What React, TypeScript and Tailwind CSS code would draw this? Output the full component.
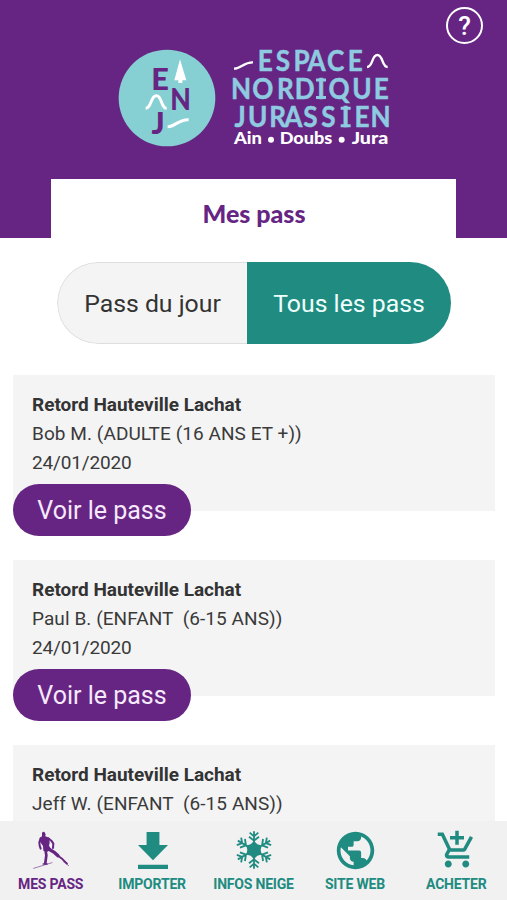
import React from "react";
import { MdAddShoppingCart, MdPublic } from "react-icons/md";

// Horizontal squeeze applied to the condensed lettering of the logo.
const SQUEEZE = 0.91;

type WordProps = { letters: string; centers: number[]; y: number };

function Word({ letters, centers, y }: WordProps) {
  return (
    <>
      <text
        transform={`scale(${SQUEEZE} 1)`}
        x={centers.map((c) => (c / SQUEEZE).toFixed(1)).join(" ")}
        y={y}
        textAnchor="middle"
        stroke="#8ecbe0"
        strokeWidth="1.500"
      >
        {letters}
      </text>
      {centers.map((c, i) =>
        letters[i] === "I" ? (
          <path key={i} d={`M${c - 15} ${y - 57}h30M${c - 15} ${y - 4.5}h30`} stroke="#8ecbe0" strokeWidth="9" />
        ) : null,
      )}
    </>
  );
}

function Logo() {
  return (
    <div className="flex pl-[118px] pt-[40px]">
      <svg className="h-[115px] w-[107px] shrink-0" viewBox="24 0 321 345">
        <circle cx="171" cy="174" r="145" fill="#86cfd2" />
        <g fill="#662583" fontFamily="Lato, sans-serif" fontWeight="900" fontSize="92" textAnchor="middle">
          <text x="150" y="149">E</text>
          <text transform="scale(0.87 1)" x="243.700" y="210">N</text>
          <text x="144" y="281">J</text>
        </g>
        <path d="M210 58l-17 63h12v8h12v-8h12z" fill="#fff" />
        <path d="M107 205c18 0 14-38 32-38s13 38 31 38" fill="none" stroke="#fff" strokeWidth="9" />
        <path d="M173 260c24 0 33-23 63-21" fill="none" stroke="#fff" strokeWidth="9" />
      </svg>
      <svg className="h-[115px] w-[175px] shrink-0" viewBox="0 0 525 345">
        <g fill="#8ecbe0" fontFamily="Lato, sans-serif" fontWeight="700" fontSize="86">
          <Word letters="ESPACE" centers={[121, 174, 230, 275, 332, 391]} y={92} />
          <Word letters="NORDIQUE" centers={[48, 113, 181, 239, 288, 342, 411, 469]} y={177} />
          <Word letters="JURASSIEN" centers={[45, 98, 158, 205, 256, 310, 362, 411, 467]} y={262} />
        </g>
        <path d="M27 86c22 0 29-20 57-19" fill="none" stroke="#fff" strokeWidth="7" />
        <path d="M426 81c19 0 13-36 31-36s13 36 31 36" fill="none" stroke="#fff" strokeWidth="7" />
        <g fill="#fff" fontFamily="Lato, sans-serif" fontWeight="900" fontSize="50">
          <text x="27" y="312" textLength="84" lengthAdjust="spacingAndGlyphs">Ain</text>
          <text x="164" y="312" textLength="158" lengthAdjust="spacingAndGlyphs">Doubs</text>
          <text x="380" y="312" textLength="110" lengthAdjust="spacingAndGlyphs">Jura</text>
        </g>
        <circle cx="138" cy="299" r="9" fill="#fff" />
        <circle cx="350" cy="299" r="9" fill="#fff" />
      </svg>
    </div>
  );
}

function SkierIcon() {
  return (
    <svg className="h-[38px] w-[38px]" viewBox="100 33 114 114" fill="currentColor" stroke="currentColor" strokeLinejoin="round" strokeLinecap="round">
      <path d="M127 38q5-5 9 0l2 6-3 7h-8z" stroke="none" />
      <path d="M120 54l7-5h11l11 5 1 14-2 9 6 10-10 8-13-3-1-14-9-13z" stroke="none" />
      <path d="M123 55l-4 12 1 10 3 9" fill="none" strokeWidth="6" />
      <path d="M146 55l9 7 6 9-1 13" fill="none" strokeWidth="6" />
      <path d="M137 88l3 18-1 8-2 15" fill="none" strokeWidth="8" />
      <path d="M147 87l18 11 10 9" fill="none" strokeWidth="10" />
      <path d="M175 107l14 11 13 13" fill="none" strokeWidth="5.500" />
      <path d="M131 132h11" fill="none" strokeWidth="5" />
      <path d="M102 145l55-17M190 124l17 13" fill="none" strokeWidth="2.500" strokeOpacity="0.7" />
    </svg>
  );
}

function DownloadIcon() {
  return (
    <svg className="h-[37px] w-[30px]" viewBox="5 3 14 17" preserveAspectRatio="none" fill="currentColor">
      <path d="M19 9h-4V3H9v6H5l7 7 7-7zM5 18v2h14v-2H5z" />
    </svg>
  );
}

function SnowflakeIcon() {
  return (
    <svg className="h-[38px] w-[38px]" viewBox="-57 -57 114 114" fill="none" stroke="currentColor" strokeWidth="5.500">
      <path d="M0-27L10-17 23-13.500 20 0 23 13.500 10 17 0 27-10 17-23 13.500-20 0-23-13.500-10-17z" fill="currentColor" stroke="none" />
      {[0, 60, 120, 180, 240, 300].map((angle) => (
        <path key={angle} transform={`rotate(${angle})`} d="M0 0V-56M-13-52L0-41 13-52M-15-40L0-28 15-40" />
      ))}
    </svg>
  );
}

const passes = [
  { holder: "Bob M. (ADULTE (16 ANS ET +))", date: "24/01/2020" },
  { holder: "Paul B. (ENFANT  (6-15 ANS))", date: "24/01/2020" },
  { holder: "Jeff W. (ENFANT  (6-15 ANS))", date: "24/01/2020" },
];

function PassCard({ holder, date }: { holder: string; date: string }) {
  return (
    <article className="mb-[49px] h-[136px] shrink-0 bg-[#f4f4f4] pt-[15px] text-[19px] leading-[29px] text-[#3a3a3a]">
      <div className="pl-[19px] whitespace-pre">
        <h2 className="font-bold tracking-[-0.02px] text-[#333]">Retord Hauteville Lachat</h2>
        <p className="tracking-[0.07px]">{holder}</p>
        <p className="tracking-[-0.15px]">{date}</p>
      </div>
      <button className="mt-[7px] flex h-[52px] w-[178px] items-center justify-center rounded-full bg-[#662583] text-[25px] text-[#f6e9fb]">
        Voir le pass
      </button>
    </article>
  );
}

const tabs = [
  { label: "MES PASS", icon: <SkierIcon />, active: true },
  { label: "IMPORTER", icon: <DownloadIcon /> },
  { label: "INFOS NEIGE", icon: <SnowflakeIcon /> },
  { label: "SITE WEB", icon: <MdPublic className="size-[45px] shrink-0" /> },
  { label: "ACHETER", icon: <MdAddShoppingCart className="size-[42px] shrink-0" /> },
];

export default function App() {
  return (
    <div className="flex h-[900px] w-[507px] flex-col overflow-hidden bg-white font-['Roboto',sans-serif]">
      <header className="relative flex h-[238px] shrink-0 flex-col justify-between bg-[#662583]">
        <Logo />
        <button className="absolute top-[7px] right-[24px] flex size-[37px] items-center justify-center rounded-full border-2 border-white text-[26px] leading-none font-medium text-white">
          ?
        </button>
        <h1 className="mx-auto flex h-[59px] w-[405px] items-center justify-center bg-white pt-[11px] pl-px font-['Lato',sans-serif] text-[25px] font-black text-[#662583]">
          Mes pass
        </h1>
      </header>

      <div className="mx-[57px] mt-[24px] flex h-[82px] w-[394px] shrink-0 overflow-hidden rounded-full text-[24.8px]">
        <button className="w-[190px] rounded-l-full border border-r-0 border-[#dedede] bg-[#f4f4f4] pt-[2px] text-[#333]">
          Pass du jour
        </button>
        <button className="flex-1 bg-[#208b80] pt-[2px] text-[#effffc]">Tous les pass</button>
      </div>

      <main className="mt-[31px] flex min-h-0 flex-1 flex-col overflow-hidden pr-[12px] pl-[13px]">
        {passes.map((pass) => (
          <PassCard key={pass.holder} {...pass} />
        ))}
      </main>

      <nav className="grid h-[79px] shrink-0 grid-cols-5 bg-[#f1f1f1]">
        {tabs.map(({ label, icon, active }) => (
          <a
            key={label}
            className={`flex flex-col items-center pt-[8px] text-[14px] font-bold tracking-[-0.2px] whitespace-nowrap ${active ? "text-[#662583]" : "text-[#208b80]"}`}
          >
            <span className="flex h-[42px] items-center pl-[2px]">{icon}</span>
            <span className="mt-[3px] leading-[20px]">{label}</span>
          </a>
        ))}
      </nav>
    </div>
  );
}
